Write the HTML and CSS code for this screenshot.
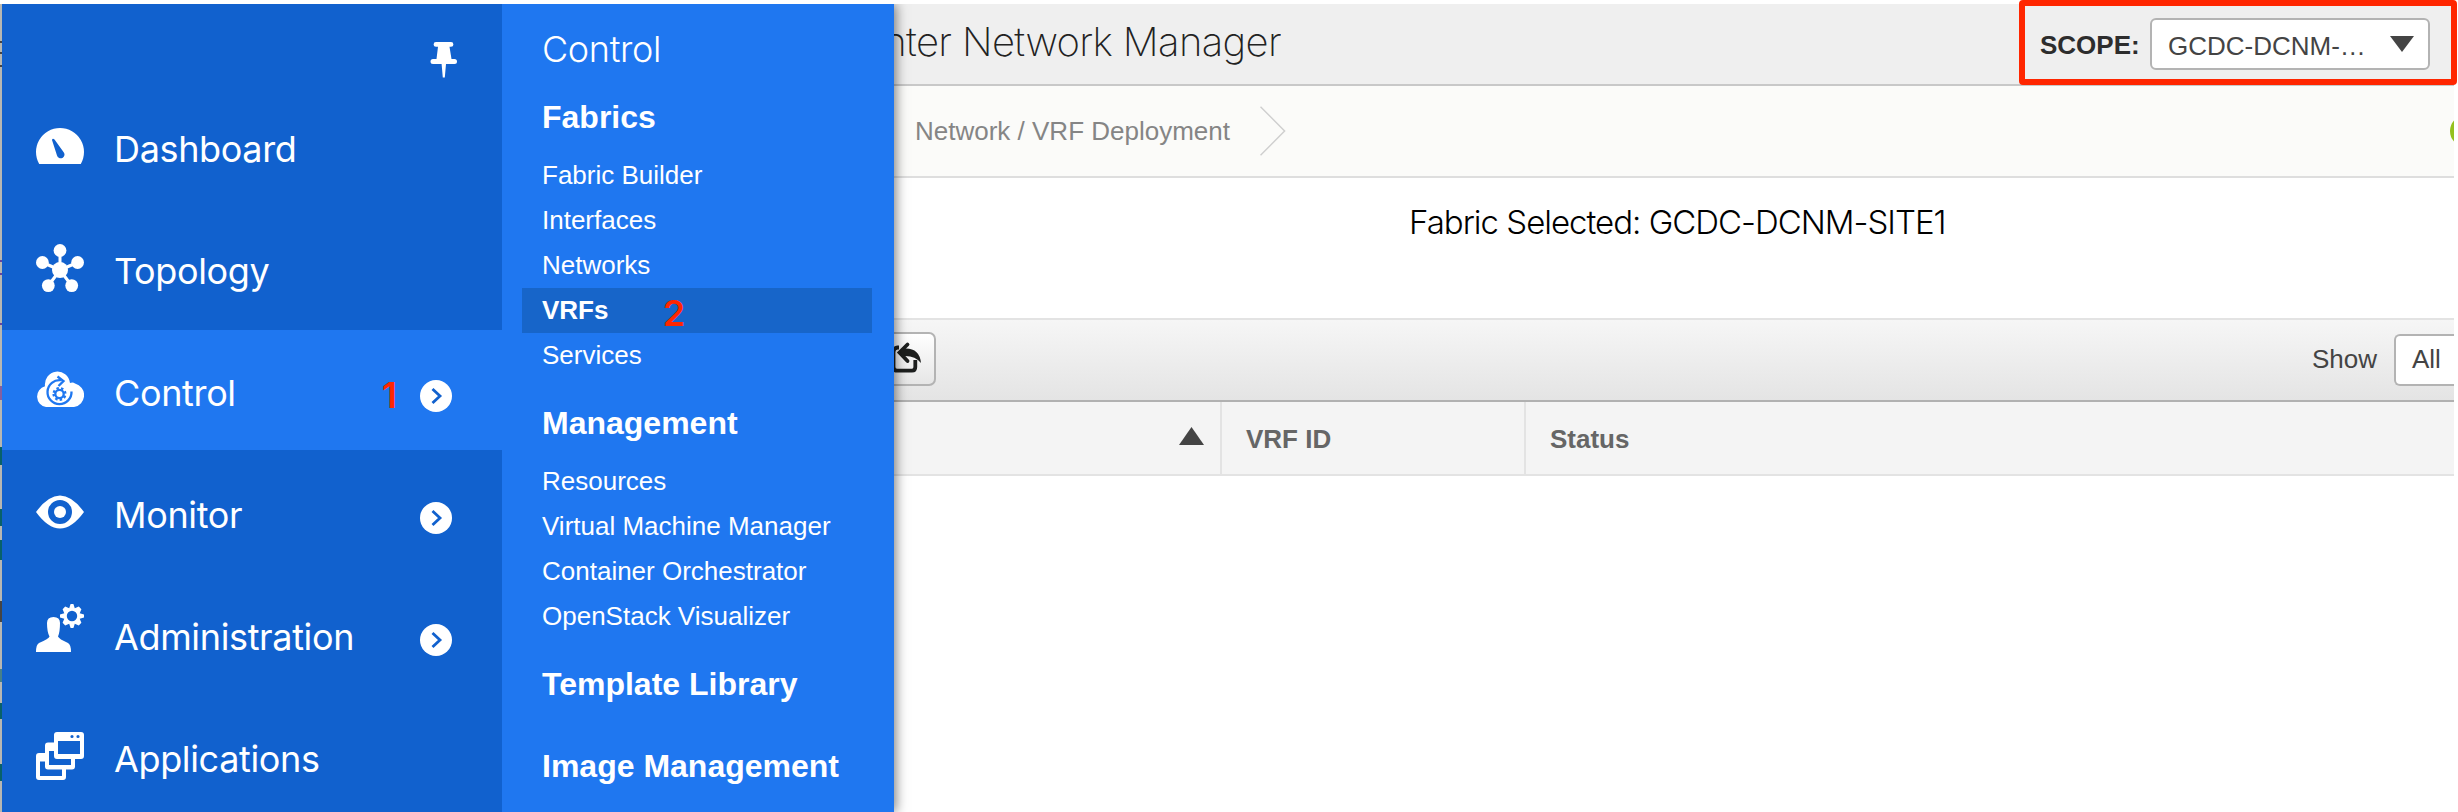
FILE: index.html
```html
<!DOCTYPE html>
<html lang="en">
<head>
<meta charset="utf-8">
<title>Data Center Network Manager</title>
<link rel="stylesheet" href="styles.css">
</head>
<body>
<div class="app">
  <div class="page-edge"></div>
  <nav class="sidebar">
    <div class="pin-row">
      <svg class="pin" viewBox="0 0 28 36"><path d="M6 0H21A2.4 2.4 0 0 1 21 4.8H19.5L21.500 17H24.500A2.500 2.500 0 0 1 24.500 22H16L14.800 35.500H12.800L11.600 22H3A2.500 2.500 0 0 1 3 17H6.500L8 4.800H6A2.400 2.400 0 0 1 6 0Z"/></svg>
    </div>
    <a class="nav-item">
      <svg class="nav-icon" viewBox="0 0 48 48"><path fill-rule="evenodd" d="M3.200 42A24 24 0 1 1 44.800 42ZM16 18Q16.500 16 18.500 17.500L27.500 30A3.800 3.800 0 1 1 21 33.500Z"/></svg>
      <span class="nav-label">Dashboard</span>
    </a>
    <a class="nav-item">
      <svg class="nav-icon" viewBox="0 0 48 48"><path class="line" d="M24 26V6M24 26L6.500 18.500M24 26L41.500 18.500M24 26L12.500 41.500M24 26L35.500 41.500"/><circle cx="24" cy="26" r="8"/><circle cx="24" cy="6.500" r="6.400"/><circle cx="6.400" cy="18.500" r="6.400"/><circle cx="41.600" cy="18.500" r="6.400"/><circle cx="12.300" cy="41.600" r="6.400"/><circle cx="35.700" cy="41.600" r="6.400"/></svg>
      <span class="nav-label">Topology</span>
    </a>
    <a class="nav-item active">
      <svg class="nav-icon" viewBox="0 0 48 48"><path d="M10 41A10 10.500 0 0 1 9 20.300A12.500 13 0 0 1 34 17Q37 16 39 17.500A12 12 0 0 1 38 41Z"/><g class="cut"><path d="M25 14.200A12 12 0 1 0 35.500 25.500"/><path d="M21.500 10.500L27.500 15L22.500 20"/><circle cx="23.500" cy="28" r="4.200"/><path stroke-dasharray="2.400 2.230" d="M17.600 28A5.900 5.900 0 1 0 29.400 28A5.900 5.900 0 1 0 17.600 28"/></g></svg>
      <span class="nav-label">Control</span>
      <span class="mark">1</span>
      <svg class="chevron" viewBox="0 0 32 32"><circle cx="16" cy="16" r="16"/><path d="M12.500 9L20 16L12.500 23"/></svg>
    </a>
    <a class="nav-item">
      <svg class="nav-icon" viewBox="0 0 48 48"><path fill-rule="evenodd" d="M0 24Q12 7.500 24 7.500T48 24Q36 40.500 24 40.500T0 24ZM24 12A12 12 0 1 0 24 36A12 12 0 1 0 24 12Z"/><circle cx="24" cy="24" r="6"/></svg>
      <span class="nav-label">Monitor</span>
      <svg class="chevron" viewBox="0 0 32 32"><circle cx="16" cy="16" r="16"/><path d="M12.500 9L20 16L12.500 23"/></svg>
    </a>
    <a class="nav-item">
      <svg class="nav-icon raised" viewBox="0 0 48 48"><path d="M0 48Q0 40.500 3 39Q13 34.500 13.500 32.500Q11 28 11 19Q11 13 17.500 13T24 19Q24 28 22 32.500Q23 35 32 39Q35 40.500 35 48Z"/><path fill-rule="evenodd" d="M34.600 0H37.400L38.800 4.300L42.800 2.600L45.400 5.200L43.700 9.200L48 10.600V13.400L43.700 14.800L45.400 18.800L42.800 21.400L38.800 19.700L37.400 24H34.600L33.200 19.700L29.200 21.400L26.600 18.800L28.300 14.800L24 13.400V10.600L28.300 9.200L26.600 5.200L29.200 2.600L33.200 4.300ZM36 6.800A5.200 5.200 0 1 0 36 17.200A5.200 5.200 0 1 0 36 6.800Z"/></svg>
      <span class="nav-label">Administration</span>
      <svg class="chevron" viewBox="0 0 32 32"><circle cx="16" cy="16" r="16"/><path d="M12.500 9L20 16L12.500 23"/></svg>
    </a>
    <a class="nav-item">
      <svg class="nav-icon" viewBox="0 0 48 48"><path fill-rule="evenodd" d="M21 0H45Q48 0 48 3V24Q48 27 45 27H39V34.500Q39 37.500 36 37.500H30V45Q30 48 27 48H3Q0 48 0 45V24Q0 21 3 21H9V13.500Q9 10.500 12 10.500H18V3Q18 0 21 0ZM22 9H44V22H22ZM13 19H18V24Q18 27 21 27H35V33H13ZM4 29.500H9V34.500Q9 37.500 12 37.500H26V44H4ZM34.400 4.500A1.600 1.600 0 1 0 37.600 4.500A1.600 1.600 0 1 0 34.400 4.500ZM40.400 4.500A1.600 1.600 0 1 0 43.600 4.500A1.600 1.600 0 1 0 40.400 4.500Z"/></svg>
      <span class="nav-label">Applications</span>
    </a>
  </nav>

  <section class="submenu">
    <h1>Control</h1>
    <h2>Fabrics</h2>
    <ul>
      <li>Fabric Builder</li>
      <li>Interfaces</li>
      <li>Networks</li>
      <li class="selected">VRFs <span class="mark">2</span></li>
      <li>Services</li>
    </ul>
    <h2>Management</h2>
    <ul>
      <li>Resources</li>
      <li>Virtual Machine Manager</li>
      <li>Container Orchestrator</li>
      <li>OpenStack Visualizer</li>
    </ul>
    <h2 class="solo">Template Library</h2>
    <h2>Image Management</h2>
  </section>

  <main class="content">
    <header class="title-bar">
      <div class="title-clip"><span class="product">Data Center Network Manager</span></div>
      <div class="scope">
        <span class="scope-label">SCOPE:</span>
        <div class="select"><span>GCDC-DCNM-…</span><svg class="arrow-down" viewBox="0 0 24 16"><path d="M0 0H24L12 16Z"/></svg></div>
      </div>
    </header>
    <div class="crumbs">
      <span class="crumb">Network / VRF Deployment</span>
      <svg class="crumb-sep" viewBox="0 0 26 50"><path d="M.5 .7L24.600 25L.5 49.300"/></svg>
      <span class="status-clip"><i class="status-dot"></i></span>
    </div>
    <div class="fabric"><span>Fabric Selected: GCDC-DCNM-SITE1</span></div>
    <div class="toolbar">
      <div class="export"><svg viewBox="0 0 36 32"><path class="tray" d="M14 4.500H12.500Q8.500 5 8.500 9V24Q8.500 27.700 12 27.700H27Q30.300 27.700 30.300 24V17"/><path class="head" d="M22.500 1.500L14.500 9.500L22.500 18"/><path d="M16 7L20 5.500Q34.500 5 36 20Q30 12.500 19 13L15 11Z"/></svg></div>
      <div class="show"><span>Show</span><div class="show-select">All</div></div>
    </div>
    <div class="table-head">
      <div class="col name"><svg class="arrow-up" viewBox="0 0 25 18"><path d="M12.500 0L25 18H0Z"/></svg></div>
      <div class="col id">VRF ID</div>
      <div class="col status">Status</div>
    </div>
  </main>
</div>
</body>
</html>
```

FILE: styles.css
```css
* { box-sizing: border-box; }
body { margin: 0; background: #fff; font-family: "Liberation Sans", Arial, sans-serif; overflow: hidden; }
h1, h2, ul { margin: 0; padding: 0; }
.app { display: flex; height: 812px; padding: 4px 4px 0 0; }
.page-edge { width: 2px; background: linear-gradient(#b7b7b2 0 37px, #444 37px 39px, #b7b7b2 39px 48px, #444 48px 50px, #b7b7b2 50px 61px, #444 61px 63px, #b7b7b2 63px 256px, #6543a0 256px 258px, #b7b7b2 258px 269px, #6543a0 269px 271px, #b7b7b2 271px 319px, #6543a0 319px 321px, #b7b7b2 321px 382px, #8460a0 382px 396px, #b7b7b2 396px 443px, #08616a 443px 461px, #b7b7b2 461px 505px, #08616a 505px 522px, #b7b7b2 522px 536px, #08616a 536px 556px, #b7b7b2 556px 597px, #454545 597px 618px, #b7b7b2 618px 665px, #47808a 665px 678px, #b7b7b2 678px 699px, #08616a 699px 715px, #b7b7b2 715px 760px, #08616a 760px 777px, #b7b7b2 777px); }
.sidebar { width: 500px; background: #1161ce; overflow: hidden; }
.pin-row { height: 82px; display: flex; justify-content: flex-end; padding: 38px 44px 0 0; }
.pin { width: 28px; height: 36px; fill: #fff; }
.nav-item { display: flex; align-items: center; height: 120px; margin-bottom: 2px; padding: 0 50px 0 34px; color: #fff; font: 36px/44px Inter, sans-serif; letter-spacing: -.35px; }
.nav-item.active { background: #1f77f0; }
.nav-icon { width: 48px; height: 48px; fill: #fff; }
.nav-icon.raised { margin-top: -12px; }
.nav-icon .line { stroke: #fff; stroke-width: 3; }
.cut path, .cut circle { fill: none; stroke: #1f77f0; stroke-width: 2.300; }
.nav-label { margin: 6px 0 0 30px; }
.chevron { width: 32px; height: 32px; fill: #fff; margin-left: auto; margin-top: 12px; }
.chevron path { fill: none; stroke: #1161ce; stroke-width: 2.800; }
.mark { color: #ff2600; font: 600 36px/40px Inter, sans-serif; }
.nav-item .mark { margin: 10px 0 0 146px; }
.submenu { position: relative; z-index: 2; width: 392px; background: #1f77f0; color: #fff; box-shadow: 2px 0 11px rgba(0,0,0,.5); clip-path: inset(0 -20px 0 0); padding: 23px 22px 0 20px; }
.submenu h1 { font: 300 36px/44px Inter, sans-serif; letter-spacing: -.35px; padding: 0 0 1px 20px; }
.submenu h2 { font-size: 32px; line-height: 40px; padding-left: 20px; margin-top: 25px; }
.submenu ul { margin-top: 16px; font-size: 26px; }
.submenu li { display: flex; align-items: center; height: 45px; padding-left: 20px; white-space: pre; }
.submenu .selected { background: #1765c9; font-weight: bold; }
.selected .mark { margin: 5px 0 0 47px; }
.submenu .solo + h2 { margin-top: 42px; }
.content { flex: 1; min-width: 0; color: #444; }
.title-bar { height: 82px; border-bottom: 2px solid #c8c8c8; background: #efefef; display: flex; justify-content: space-between; }
.title-clip { width: 387px; height: 80px; display: flex; justify-content: flex-end; overflow: hidden; }
.product { flex: none; white-space: nowrap; font: 150 40px/76px Inter, sans-serif; letter-spacing: -.65px; color: #222; }
.scope { position: relative; right: -3px; top: -4px; width: 438px; height: 85px; border: 6px solid #ff2600; border-radius: 4px; display: flex; align-items: center; padding: 3px 21px 0 15px; justify-content: space-between; }
.scope-label { font: bold 26px/30px "Liberation Sans", sans-serif; color: #2d2d2d; margin-top: 2px; }
.select { width: 280px; height: 52px; border: 2px solid #b3b3b3; border-radius: 6px; background: #fff; display: flex; align-items: center; justify-content: space-between; padding: 4px 14px 0 16px; font-size: 26px; }
.arrow-down { width: 24px; height: 16px; fill: #444; margin-top: -4px; }
.crumbs { height: 92px; border-bottom: 2px solid #dedede; background: #fbfbf9; display: flex; align-items: center; padding-left: 21px; font-size: 26px; color: #858585; }
.crumb-sep { width: 26px; height: 50px; margin-left: 30px; fill: none; stroke: #cfcfcf; stroke-width: 1.500; }
.status-clip { margin-left: auto; width: 4px; height: 32px; overflow: hidden; }
.status-dot { display: block; width: 32px; height: 32px; border-radius: 50%; background: #95c11f; }
.fabric { height: 140px; padding: 25px 0 0 515px; font: 300 33px/38px Inter, sans-serif; letter-spacing: -1px; color: #000; white-space: nowrap; }
.toolbar { height: 84px; border-top: 2px solid #e3e3e3; border-bottom: 2px solid #b1b1b1; background: linear-gradient(#f6f6f6, #e4e4e4); display: flex; justify-content: space-between; }
.export { width: 42px; height: 54px; margin-top: 12px; border: 2px solid #b3b3b3; border-left: 0; border-radius: 0 7px 7px 0; background: linear-gradient(#fff, #e6e6e6); display: flex; justify-content: flex-end; padding: 9px 13px 0 0; overflow: hidden; }
.export svg { flex: none; width: 36px; height: 32px; fill: #1d1f1e; overflow: visible; }
.export .tray, .export .head { fill: none; stroke: #1d1f1e; stroke-width: 3.800; stroke-linecap: round; }
.export .tray { stroke-linecap: butt; }
.show { display: flex; font-size: 26px; line-height: 30px; padding-top: 14px; }
.show span { padding: 10px 17px 0 0; }
.show-select { width: 60px; height: 52px; border: 2px solid #b3b3b3; border-right: 0; border-radius: 6px 0 0 6px; background: #fff; padding: 8px 0 0 16px; }
.table-head { height: 74px; background: #f4f4f4; border-bottom: 2px solid #e3e3e3; display: flex; font-weight: bold; font-size: 26px; color: #666; }
.col { border-right: 2px solid #e3e3e3; padding-left: 24px; display: flex; align-items: center; padding-top: 2px; }
.name { width: 328px; justify-content: flex-end; padding-right: 16px; }
.id { width: 304px; }
.status { border: 0; }
.arrow-up { width: 25px; height: 18px; fill: #444; margin-top: -6px; }
```
